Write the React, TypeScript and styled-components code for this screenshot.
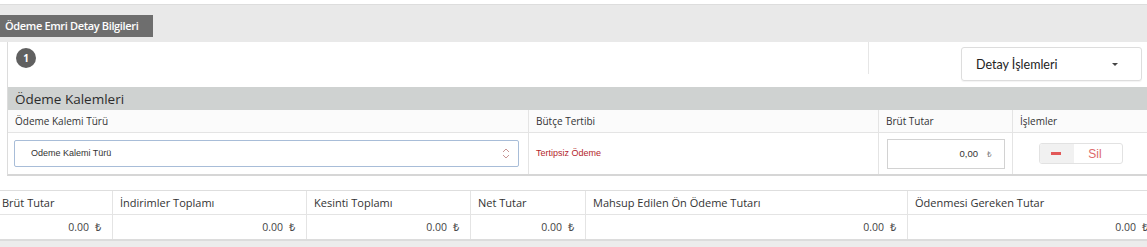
import styled, { createGlobalStyle } from "styled-components";

const GlobalStyle = createGlobalStyle`
  html, body {
    margin: 0;
    padding: 0;
    background: #ffffff;
    overflow: hidden;
  }
  body {
    font-family: "Open Sans", "Liberation Sans", sans-serif;
    color: #333333;
  }
`;

const kalemCols = "521px 350px 134px 135px";
const summary = [
  { title: "Brüt Tutar", width: 112 },
  { title: "İndirimler Toplamı", width: 194 },
  { title: "Kesinti Toplamı", width: 164 },
  { title: "Net Tutar", width: 115 },
  { title: "Mahsup Edilen Ön Ödeme Tutarı", width: 322 },
  { title: "Ödenmesi Gereken Tutar", width: 252 },
];

const Chevrons = () => (
  <svg width="8" height="11" viewBox="0 0 8 11">
    <path d="M1 4 L4 1 L7 4" fill="none" stroke="#c79595" strokeWidth="1" />
    <path d="M1 7 L4 10 L7 7" fill="none" stroke="#c79595" strokeWidth="1" />
  </svg>
);

export default function App() {
  return (
    <>
      <GlobalStyle />
      <Page>
        <Header>
          <Tab>Ödeme Emri Detay Bilgileri</Tab>
        </Header>
        <Panel>
          <TopRow>
            <Badge>1</Badge>
            <Spacer />
            <Divider />
            <Dropdown>
              <span>Detay İşlemleri</span>
              <Caret />
            </Dropdown>
          </TopRow>
          <Bar>Ödeme Kalemleri</Bar>
          <KalemTable>
            <HeadCell>Ödeme Kalemi Türü</HeadCell>
            <HeadCell>Bütçe Tertibi</HeadCell>
            <HeadCell>Brüt Tutar</HeadCell>
            <HeadCell $last>İşlemler</HeadCell>
            <BodyCell>
              <Select>
                <span>Odeme Kalemi Türü</span>
                <Chevrons />
              </Select>
            </BodyCell>
            <BodyCell>
              <Tertip>Tertipsiz Ödeme</Tertip>
            </BodyCell>
            <BodyCell>
              <AmountInput>
                0,00 <Lira>₺</Lira>
              </AmountInput>
            </BodyCell>
            <BodyCell $last>
              <DeleteButton>
                <Minus />
                <DeleteLabel>Sil</DeleteLabel>
              </DeleteButton>
            </BodyCell>
          </KalemTable>
        </Panel>
        <Summary>
          {summary.map((s, i) => (
            <SumColumn key={s.title} $w={s.width} $first={i === 0}>
              <SumHead $first={i === 0}>{s.title}</SumHead>
              <SumValue>
                0.00<SumLira>₺</SumLira>
              </SumValue>
            </SumColumn>
          ))}
        </Summary>
        <Footer />
      </Page>
    </>
  );
}

const Page = styled.div`
  width: 1147px;
  height: 247px;
  padding-top: 4px;
  box-sizing: border-box;
  display: flex;
  flex-direction: column;
`;

const Header = styled.div`
  height: 38px;
  border-top: 1px solid #dddddd;
  background: #e9e9e9;
  padding-top: 8px;
  box-sizing: border-box;
`;

const Tab = styled.div`
  display: inline-block;
  height: 22px;
  line-height: 22px;
  width: 153px;
  box-sizing: border-box;
  padding-left: 5px;
  background: #6e6e6e;
  color: #ffffff;
  font-size: 11px;
  font-weight: 600;
  letter-spacing: -0.35px;
  white-space: nowrap;
`;

const Panel = styled.div`
  margin-left: 7px;
  border-left: 1px solid #dcdcdc;
  border-bottom: 2px solid #d6d6d6;
  background: #ffffff;
`;

const TopRow = styled.div`
  height: 45px;
  display: flex;
  align-items: flex-start;
`;

const Badge = styled.div`
  margin: 6px 0 0 8px;
  width: 20px;
  height: 20px;
  border-radius: 50%;
  background: #606060;
  color: #ffffff;
  font-size: 10px;
  font-weight: 700;
  display: flex;
  align-items: center;
  justify-content: center;
`;

const Spacer = styled.div`
  flex: 1;
`;

const Divider = styled.div`
  width: 1px;
  height: 32px;
  background: #e6e6e6;
`;

const Dropdown = styled.div`
  margin: 5px 5px 0 92px;
  width: 181px;
  height: 34px;
  box-sizing: border-box;
  border: 1px solid #dddddd;
  border-radius: 3px;
  box-shadow: 0 1px 1px rgba(0, 0, 0, 0.05);
  display: flex;
  align-items: center;
  justify-content: space-between;
  padding: 0 23px 0 14px;
  font-family: Lato, "Open Sans", sans-serif;
  font-size: 12.5px;
  color: #222222;
`;

const Caret = styled.span`
  width: 0;
  height: 0;
  border-left: 3px solid transparent;
  border-right: 3px solid transparent;
  border-top: 3px solid #444444;
`;

const Bar = styled.div`
  height: 23px;
  line-height: 24px;
  background: #cfd2d1;
  padding-left: 7px;
  font-size: 13.5px;
  color: #2c2c2c;
`;

const KalemTable = styled.div`
  display: grid;
  grid-template-columns: ${kalemCols};
  grid-template-rows: 23px 41px;
`;

const HeadCell = styled.div<{ $last?: boolean }>`
  border-right: ${({ $last }) => ($last ? "none" : "1px solid #e4e4e4")};
  border-bottom: 1px solid #e4e4e4;
  background: #fbfbfb;
  padding-left: 7px;
  font-size: 10px;
  line-height: 23px;
  color: #333333;
`;

const BodyCell = styled.div<{ $last?: boolean }>`
  border-right: ${({ $last }) => ($last ? "none" : "1px solid #e4e4e4")};
  display: flex;
  align-items: center;
  padding: 0 7px;
`;

const Select = styled.div`
  width: 505px;
  height: 27px;
  margin-top: -1px;
  margin-left: -1px;
  box-sizing: border-box;
  border: 1px solid #a8bdd8;
  border-radius: 2px;
  display: flex;
  align-items: center;
  justify-content: space-between;
  padding: 0 8px 0 16px;
  font-family: "Liberation Sans", Arial, sans-serif;
  font-size: 9px;
  color: #333333;
`;

const Tertip = styled.span`
  font-family: "Liberation Sans", Arial, sans-serif;
  font-size: 9px;
  color: #b3262c;
  margin-top: -1px;
`;

const AmountInput = styled.div`
  width: 120px;
  height: 30px;
  margin-left: 1px;
  box-sizing: border-box;
  border: 1px solid #d2d2d2;
  display: flex;
  align-items: center;
  justify-content: flex-end;
  gap: 9px;
  padding-right: 12px;
  font-family: "Liberation Sans", Arial, sans-serif;
  font-size: 9.5px;
  color: #333333;
`;

const Lira = styled.span`
  font-size: 8px;
  color: #777777;
`;

const DeleteButton = styled.div`
  margin: 0 0 0 19px;
  width: 84px;
  height: 21px;
  box-sizing: border-box;
  border: 1px solid #e2e2e2;
  border-radius: 3px;
  display: flex;
  overflow: hidden;
`;

const Minus = styled.div`
  width: 34px;
  background: #f1f1f1;
  position: relative;
  &::after {
    content: "";
    position: absolute;
    left: 11px;
    top: 8px;
    width: 10px;
    height: 3px;
    background: #e25858;
  }
`;

const DeleteLabel = styled.div`
  flex: 1;
  display: flex;
  align-items: center;
  justify-content: center;
  font-family: "Liberation Sans", Arial, sans-serif;
  font-size: 12px;
  color: #dd6a6a;
  padding-right: 6px;
`;

const Summary = styled.div`
  margin-top: 14px;
  display: flex;
  border-top: 1px solid #dedede;
  border-bottom: 2px solid #dcdcdc;
  width: 1159px;
`;

const SumColumn = styled.div<{ $w: number; $first: boolean }>`
  width: ${({ $w }) => $w}px;
  flex-shrink: 0;
  border-left: ${({ $first }) => ($first ? "none" : "1px solid #e4e4e4")};
  box-sizing: border-box;
`;

const SumHead = styled.div<{ $first: boolean }>`
  height: 23px;
  line-height: 23px;
  border-bottom: 1px solid #e4e4e4;
  padding-left: ${({ $first }) => ($first ? "2px" : "7px")};
  font-size: 11px;
  color: #333333;
  white-space: nowrap;
`;

const SumValue = styled.div`
  height: 24px;
  line-height: 24px;
  text-align: right;
  padding-right: 11px;
  font-size: 10.5px;
  color: #444444;
`;

const SumLira = styled.span`
  margin-left: 6px;
  font-size: 11px;
`;

const Footer = styled.div`
  flex: 1;
  background: #ececec;
`;
